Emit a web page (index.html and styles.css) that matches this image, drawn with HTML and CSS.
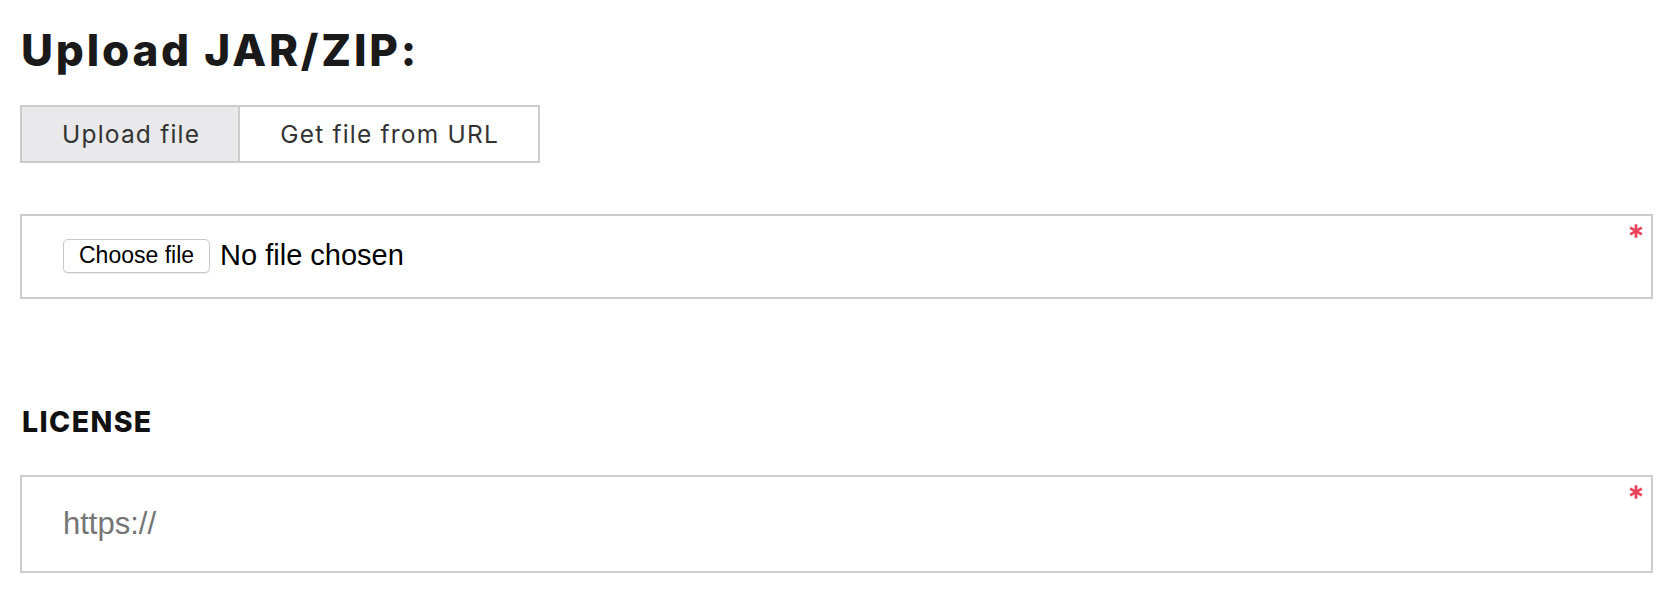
FILE: index.html
```html
<!DOCTYPE html>
<html lang="en">
<head>
<meta charset="utf-8">
<title>Upload JAR/ZIP</title>
<link rel="stylesheet" href="styles.css">
</head>
<body>
<div class="page">
  <h1 class="title">Upload JAR/ZIP:</h1>
  <div class="tabs">
    <div class="tab tab-active">Upload file</div>
    <div class="tab">Get file from URL</div>
  </div>
  <div class="field field-file">
    <button class="choose-btn" type="button">Choose file</button>
    <span class="file-status">No file chosen</span>
    <svg class="required" viewBox="0 0 14 14" width="14" height="14" aria-hidden="true">
      <g stroke="#e8435b" stroke-width="2.8" stroke-linecap="butt">
        <line x1="7" y1="0.3" x2="7" y2="13.7"/>
        <line x1="1.2" y1="3.65" x2="12.8" y2="10.35"/>
        <line x1="1.2" y1="10.35" x2="12.8" y2="3.65"/>
      </g>
    </svg>
  </div>
  <div class="label">LICENSE</div>
  <div class="field field-url">
    <input class="url-input" type="text" placeholder="https://">
    <svg class="required" viewBox="0 0 14 14" width="14" height="14" aria-hidden="true">
      <g stroke="#e8435b" stroke-width="2.8" stroke-linecap="butt">
        <line x1="7" y1="0.3" x2="7" y2="13.7"/>
        <line x1="1.2" y1="3.65" x2="12.8" y2="10.35"/>
        <line x1="1.2" y1="10.35" x2="12.8" y2="3.65"/>
      </g>
    </svg>
  </div>
</div>
</body>
</html>
```

FILE: styles.css
```css
html, body {
  margin: 0;
  padding: 0;
  background: #ffffff;
}

.page {
  display: flex;
  flex-direction: column;
  padding: 0 23px 0 20px;
  font-family: Inter, "Open Sans", sans-serif;
}

.title {
  margin: 0;
  padding-top: 28px;
  padding-left: 1px;
  font-size: 44px;
  line-height: 44px;
  font-weight: 800;
  letter-spacing: 2.8px;
  color: #1a1a1a;
}

.tabs {
  margin-top: 33px;
  align-self: flex-start;
  display: flex;
  height: 58px;
  box-sizing: border-box;
  border: 2px solid #cccccc;
}

.tab {
  display: flex;
  align-items: center;
  padding: 0 38px 0 40px;
  font-size: 24.5px;
  letter-spacing: 1.2px;
  color: #333333;
  background: #ffffff;
}

.tab + .tab {
  border-left: 2px solid #cccccc;
  padding: 0 39px 0 40px;
}

.tab-active {
  background: #e9e9eb;
}

.field {
  position: relative;
  display: flex;
  align-items: center;
  box-sizing: border-box;
  border: 2px solid #cccccc;
  padding-left: 41px;
}

.field-file {
  margin-top: 51px;
  height: 85px;
}

.choose-btn {
  height: 34px;
  margin: -2px 0 0 0;
  padding: 0 15px;
  font-family: "Liberation Sans", Arial, sans-serif;
  font-size: 23px;
  color: #000000;
  background: #ffffff;
  border: 1px solid #c8c8c8;
  border-radius: 5px;
  box-shadow: 0 1px 1px rgba(0, 0, 0, 0.08);
}

.file-status {
  margin-left: 10px;
  margin-top: -2px;
  font-family: "Liberation Sans", Arial, sans-serif;
  font-size: 29px;
  color: #000000;
}

.label {
  margin-top: 109px;
  padding-left: 2px;
  font-size: 28.5px;
  line-height: 28.5px;
  font-weight: 800;
  letter-spacing: 1.4px;
  color: #111111;
}

.field-url {
  margin-top: 38px;
  height: 98px;
  padding-left: 41px;
}

.url-input {
  flex: 1;
  border: none;
  outline: none;
  padding: 0;
  margin: 0;
  background: transparent;
  font-family: "Liberation Sans", Arial, sans-serif;
  font-size: 31px;
  color: #333333;
}

.url-input::placeholder {
  color: #757575;
  opacity: 1;
}

.required {
  position: absolute;
  top: 8px;
  right: 8px;
  display: block;
}
```
